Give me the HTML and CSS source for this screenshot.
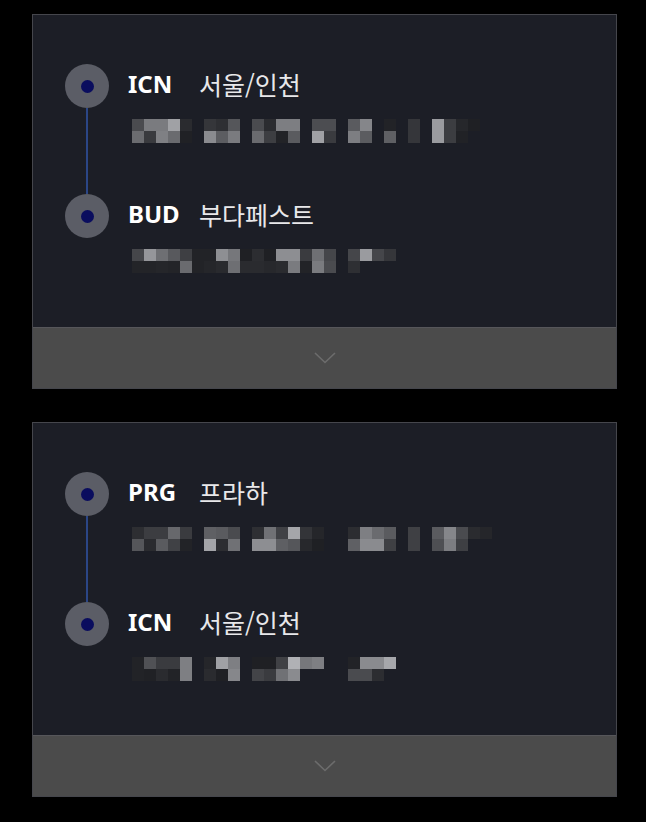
FILE: index.html
```html
<!DOCTYPE html>
<html lang="ko">
<head>
    <meta charset="UTF-8">
    <meta name="viewport" content="width=device-width, initial-scale=1.0">
    <title>여정</title>
    <link rel="stylesheet" href="styles.css">
</head>
<body>
    <div class="list">
        <div class="card">
            <div class="route">
                <div class="stop">
                    <div class="marker"><span class="dot"></span><span class="line"></span></div>
                    <div class="info">
                        <div class="place"><span class="code">ICN</span><span class="city">서울/인천</span></div>
                        <div class="mosaic" data-rows="4a7a7aa02a00352e55004a2b7d7d004c4c005a8500220035009a3c261f00|6b397f6a20008a5c7a006a3d225a00a03a007d5b005f0035009a3c210000"></div>
                    </div>
                </div>
                <div class="stop">
                    <div class="marker"><span class="dot"></span></div>
                    <div class="info">
                        <div class="place"><span class="code">BUD</span><span class="city">부다페스트</span></div>
                        <div class="mosaic" data-rows="45956e583e22228e761f2c1f8d8d3a6f4500459a4535|232325236a2225296e2a2a272a7a227a4a002e"></div>
                    </div>
                </div>
            </div>
            <div class="card-foot">
                <svg class="chevron" width="22" height="12" viewBox="0 0 22 12"><polyline points="1,1 11,10.5 21,1" /></svg>
            </div>
        </div>

        <div class="card">
            <div class="route">
                <div class="stop">
                    <div class="marker"><span class="dot"></span><span class="line"></span></div>
                    <div class="info">
                        <div class="place"><span class="code">PRG</span><span class="city">프라하</span></div>
                        <div class="mosaic" data-rows="2d3c3c673a005f5a4a002e7040a5332500002c7e6a5a003f005a854a2a25|552a5a402200a32c70008d8d5e55271f00005f8a8a3f003f004e7c3e"></div>
                    </div>
                </div>
                <div class="stop">
                    <div class="marker"><span class="dot"></span></div>
                    <div class="info">
                        <div class="place"><span class="code">ICN</span><span class="city">서울/인천</span></div>
                        <div class="mosaic" data-rows="22503a3a7e0025a07e001f1f40b0767e0000228a8aa6|22202a227e002a1f8600433a708a000000004a4a2c"></div>
                    </div>
                </div>
            </div>
            <div class="card-foot">
                <svg class="chevron" width="22" height="12" viewBox="0 0 22 12"><polyline points="1,1 11,10.5 21,1" /></svg>
            </div>
        </div>
    </div>

    <script src="script.js"></script>
</body>
</html>
```

FILE: styles.css
```css
* {
    margin: 0;
    padding: 0;
    box-sizing: border-box;
}

body {
    background: #000;
    color: #fff;
    font-family: "Noto Sans", "Noto Sans CJK KR", sans-serif;
}

.list {
    display: flex;
    flex-direction: column;
    gap: 33px;
    padding: 14px 29px 0 32px;
}

.card {
    border: 1px solid #45464c;
    background: #1c1e26;
}

.route {
    height: 312px;
    padding: 49px 32px 0;
}

.stop {
    display: flex;
    gap: 19px;
}

.marker {
    display: flex;
    flex-direction: column;
    align-items: center;
    width: 44px;
}

.dot {
    width: 44px;
    height: 44px;
    border-radius: 50%;
    background: #5b5d66;
    display: flex;
    align-items: center;
    justify-content: center;
}

.dot::after {
    content: "";
    width: 13px;
    height: 13px;
    border-radius: 50%;
    background: #0a0d5e;
}

.line {
    width: 2px;
    height: 86px;
    background: #2b4686;
}

.place {
    height: 44px;
    display: flex;
    align-items: center;
    padding-bottom: 4px;
    line-height: 1;
}

.code {
    width: 71px;
    font-size: 24px;
    font-weight: 700;
    color: #fff;
}

.city {
    font-family: "Noto Sans CJK KR", sans-serif;
    font-size: 25px;
    color: #e8e8ea;
}

.mosaic {
    display: grid;
    grid-template-columns: repeat(30, 12px);
    grid-auto-rows: 12px;
    margin: 11px 0 0 4px;
}

.card-foot {
    height: 61px;
    background: #4b4b4b;
    border-top: 1px solid #56565a;
    display: flex;
    align-items: center;
    justify-content: center;
}

.chevron polyline {
    fill: none;
    stroke: #6c6c6c;
    stroke-width: 1.6;
}
```

FILE: script.js
```js
// blurred (pixelated) address lines under each stop
document.querySelectorAll('.mosaic').forEach(function (el) {
    el.dataset.rows.split('|').forEach(function (row) {
        for (let i = 0; i < 30; i++) {
            const hex = row.substr(i * 2, 2);
            const tile = document.createElement('span');
            if (hex && hex !== '00') {
                const v = parseInt(hex, 16);
                tile.style.background = `rgb(${v}, ${v + 1}, ${v + 5})`;
            }
            el.appendChild(tile);
        }
    });
});
```
